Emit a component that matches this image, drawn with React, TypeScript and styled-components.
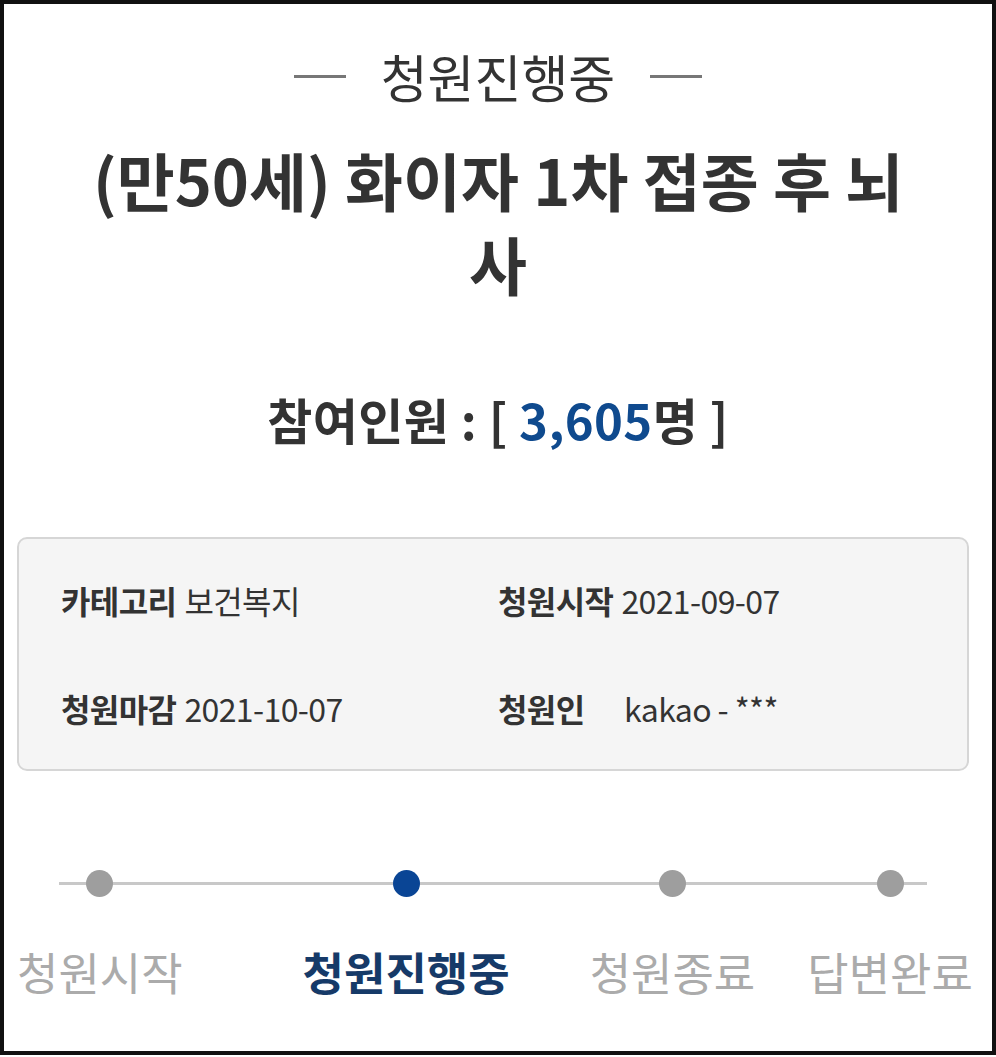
import React from 'react'
import styled, { createGlobalStyle } from 'styled-components'

const GlobalStyle = createGlobalStyle`
  html, body {
    margin: 0;
    padding: 0;
    background: #ffffff;
  }
  body {
    font-family: 'Noto Sans CJK KR', 'Noto Sans', sans-serif;
    color: #333333;
  }
`

const steps = [
  { label: '청원시작', offset: 0, active: false },
  { label: '청원진행중', offset: 120, active: true },
  { label: '청원종료', offset: 80, active: false },
  { label: '답변완료', offset: 52, active: false },
]

const infoRows = [
  { label: '카테고리', value: '보건복지' },
  { label: '청원시작', value: '2021-09-07' },
  { label: '청원마감', value: '2021-10-07' },
  { label: '청원인', value: 'kakao - ***', wide: true },
]

const App = () => {
  return (
    <>
      <GlobalStyle />
      <Frame>
        <StatusRow>
          <Dash />
          <StatusText>청원진행중</StatusText>
          <Dash />
        </StatusRow>

        <Title>(만50세) 화이자 1차 접종 후 뇌사</Title>

        <Count>
          참여인원 : [ <CountNumber>3,605</CountNumber>명 ]
        </Count>

        <InfoBox>
          {infoRows.map((row) => (
            <InfoItem key={row.label}>
              <InfoLabel wide={row.wide}>{row.label}</InfoLabel>
              <InfoValue>{row.value}</InfoValue>
            </InfoItem>
          ))}
        </InfoBox>

        <Steps>
          {steps.map((step) => (
            <Step key={step.label} offset={step.offset}>
              <Dot active={step.active} />
              <StepLabel active={step.active}>{step.label}</StepLabel>
            </Step>
          ))}
        </Steps>
      </Frame>
    </>
  )
}

const Frame = styled.div`
  box-sizing: border-box;
  width: 996px;
  height: 1055px;
  border: 4px solid #111111;
  padding: 38px 0 0 0;
  display: flex;
  flex-direction: column;
  align-items: center;
  overflow: hidden;
`

const StatusRow = styled.div`
  display: flex;
  align-items: center;
  gap: 35px;
  height: 68px;
`

const Dash = styled.span`
  width: 52px;
  height: 3px;
  background: #777777;
`

const StatusText = styled.span`
  font-size: 51px;
  line-height: 68px;
  color: #333333;
`

const Title = styled.h1`
  margin: 27px 0 0;
  max-width: 840px;
  font-size: 63px;
  line-height: 84px;
  font-weight: 700;
  color: #333333;
  text-align: center;
`

const Count = styled.div`
  margin-top: 83px;
  font-size: 49px;
  line-height: 62px;
  font-weight: 700;
  color: #333333;
  letter-spacing: 0.4px;
`

const CountNumber = styled.span`
  color: #0f4a8e;
`

const InfoBox = styled.div`
  box-sizing: border-box;
  margin-top: 87px;
  align-self: stretch;
  margin-left: 13px;
  margin-right: 23px;
  padding: 39px 0 39px 42px;
  background: #f5f5f5;
  border: 2px solid #d6d6d6;
  border-radius: 10px;
  display: grid;
  grid-template-columns: 437px 1fr;
  row-gap: 64px;
`

const InfoItem = styled.div`
  display: flex;
  align-items: center;
  font-size: 32px;
  line-height: 44px;
  letter-spacing: -0.6px;
`

const InfoLabel = styled.span<{ wide?: boolean }>`
  font-weight: 700;
  color: #333333;
  margin-right: 8px;
  min-width: ${(props) => (props.wide ? '118px' : 'auto')};
`

const InfoValue = styled.span`
  font-weight: 400;
  color: #333333;
`

const Steps = styled.div`
  position: relative;
  margin-top: 99px;
  align-self: flex-start;
  margin-left: 13px;
  display: flex;

  &::before {
    content: '';
    position: absolute;
    left: 42px;
    right: 46px;
    top: 12px;
    height: 3px;
    background: #c8c8c8;
  }
`

const Step = styled.div<{ offset: number }>`
  position: relative;
  margin-left: ${(props) => `${props.offset}px`};
  display: flex;
  flex-direction: column;
  align-items: center;
`

const Dot = styled.span<{ active?: boolean }>`
  width: 27px;
  height: 27px;
  border-radius: 50%;
  background: ${(props) => (props.active ? '#0a4595' : '#9e9e9e')};
  margin-bottom: 44px;
`

const StepLabel = styled.span<{ active?: boolean }>`
  font-size: 45px;
  line-height: 62px;
  white-space: nowrap;
  font-weight: ${(props) => (props.active ? 700 : 400)};
  color: ${(props) => (props.active ? '#163a68' : '#ababab')};
`

export default App
